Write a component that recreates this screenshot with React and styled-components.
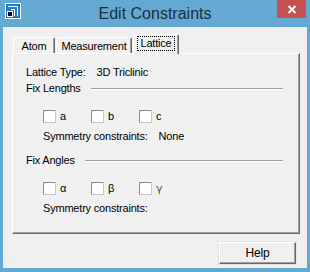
import React from 'react';
import styled, { createGlobalStyle } from 'styled-components';

const tabs = [
  { label: 'Atom', width: 42 },
  { label: 'Measurement', width: 76 },
  { label: 'Lattice', width: 46, active: true },
];

function AppIcon() {
  return (
    <svg width="16" height="16" viewBox="0 0 16 16">
      <rect x="0.5" y="0.5" width="15" height="15" fill="#1e7ccf" stroke="#ffffff" />
      <path d="M3 3.5H12.5V13" fill="none" stroke="#ffffff" />
      <path d="M6 6.5H9.5V13" fill="none" stroke="#ffffff" />
      <rect x="2.5" y="8.5" width="5" height="5" fill="#000000" stroke="#ffffff" />
    </svg>
  );
}

function CloseGlyph() {
  return (
    <svg width="10" height="9" viewBox="0 0 10 9">
      <path d="M1.5 1L8.5 8M8.5 1L1.5 8" stroke="#ffffff" strokeWidth="2" />
    </svg>
  );
}

function Check({ label, serif }) {
  return (
    <CheckItem>
      <Box />
      <CheckLabel $serif={serif}>{label}</CheckLabel>
    </CheckItem>
  );
}

export default function App() {
  return (
    <>
      <GlobalStyle />
      <Window>
        <TitleBar>
          <IconSlot><AppIcon /></IconSlot>
          <Title>Edit Constraints</Title>
          <Buttons>
            <CloseButton><CloseGlyph /></CloseButton>
          </Buttons>
        </TitleBar>

        <Client>
          <TabStrip>
            {tabs.map((t) => (
              <Tab key={t.label} $active={t.active} $width={t.width}>
                {t.active ? <Focus>{t.label}</Focus> : t.label}
              </Tab>
            ))}
          </TabStrip>

          <Panel>
            <Line>Lattice Type:<Value>3D Triclinic</Value></Line>

            <Group>
              <span>Fix Lengths</span>
              <Etched />
            </Group>
            <CheckRow>
              <Check label="a" />
              <Check label="b" />
              <Check label="c" />
            </CheckRow>
            <SymLine>Symmetry constraints:<Value>None</Value></SymLine>

            <Group $top={11}>
              <span>Fix Angles</span>
              <Etched />
            </Group>
            <CheckRow>
              <Check label="α" />
              <Check label="β" />
              <Check label="γ" serif />
            </CheckRow>
            <SymLine>Symmetry constraints:</SymLine>
          </Panel>

          <Footer>
            <Button>Help</Button>
          </Footer>
        </Client>
      </Window>
    </>
  );
}

const GlobalStyle = createGlobalStyle`
  body {
    margin: 0;
    font-family: "Liberation Sans", Arial, sans-serif;
  }
`;

const Window = styled.div`
  width: 310px;
  height: 272px;
  background: #63a9d1;
  display: flex;
  flex-direction: column;
  box-sizing: border-box;
`;

const TitleBar = styled.div`
  height: 27px;
  display: grid;
  grid-template-columns: 1fr auto 1fr;
  align-items: start;
`;

const IconSlot = styled.div`
  padding: 3px 0 0 5px;
  line-height: 0;
`;

const Title = styled.div`
  font-size: 16px;
  line-height: 16px;
  padding-top: 6px;
  color: #1f2f3e;
`;

const Buttons = styled.div`
  display: flex;
  justify-content: flex-end;
  padding-right: 4px;
`;

const CloseButton = styled.div`
  width: 29px;
  height: 18px;
  background: #c75050;
  display: flex;
  align-items: center;
  justify-content: center;
`;

const Client = styled.div`
  flex: 1;
  margin: 0 3px 4px 3px;
  background: #f0f0f0;
  padding: 7px 7px 0 9px;
  display: flex;
  flex-direction: column;
  font-size: 11px;
  letter-spacing: -0.2px;
  color: #000;
`;

const TabStrip = styled.div`
  display: flex;
  align-items: flex-end;
  height: 19px;
  padding-left: 1px;
  position: relative;
  z-index: 1;
`;

const Tab = styled.div`
  box-sizing: border-box;
  width: ${(p) => p.$width}px;
  height: ${(p) => (p.$active ? 20 : 16)}px;
  margin-bottom: ${(p) => (p.$active ? -1 : 0)}px;
  margin-right: 1px;
  padding-top: 2px;
  text-align: center;
  background: #f0f0f0;
  border-top: 1px solid #ffffff;
  border-left: 1px solid #ffffff;
  border-right: 1px solid #696969;
  border-radius: 2px 2px 0 0;
  box-shadow: inset -1px 0 #a0a0a0;
  line-height: 13px;
`;

const Focus = styled.span`
  display: inline-block;
  outline: 1px dotted #000;
  padding: 0 2px;
  line-height: 13px;
`;

const Panel = styled.div`
  box-sizing: border-box;
  height: 181px;
  width: 288px;
  border-top: 1px solid #ffffff;
  border-left: 1px solid #ffffff;
  border-right: 1px solid #696969;
  border-bottom: 1px solid #696969;
  box-shadow: inset -1px -1px #a0a0a0;
  padding: 12px 16px 0 13px;
  line-height: 13px;
`;

const Line = styled.div`
  display: flex;
`;

const Value = styled.span`
  margin-left: 11px;
`;

const Group = styled.div`
  display: flex;
  align-items: center;
  margin-top: ${(p) => p.$top ?? 3}px;
`;

const Etched = styled.div`
  flex: 1;
  margin-left: 10px;
  border-top: 1px solid #a0a0a0;
  border-bottom: 1px solid #ffffff;
`;

const CheckRow = styled.div`
  display: flex;
  margin-top: 15px;
  padding-left: 17px;
`;

const CheckItem = styled.div`
  display: flex;
  align-items: center;
  width: 48px;
`;

const Box = styled.div`
  box-sizing: border-box;
  width: 13px;
  height: 13px;
  background: #ffffff;
  border: 1px solid #8a8a8a;
  border-right-color: #c8c8c8;
  border-bottom-color: #c8c8c8;
`;

const CheckLabel = styled.span`
  margin-left: 4px;
  font-family: ${(p) => (p.$serif ? '"DejaVu Sans", sans-serif' : 'inherit')};
  color: ${(p) => (p.$serif ? '#555' : 'inherit')};
`;

const SymLine = styled.div`
  margin-top: 7px;
  padding-left: 17px;
`;

const Footer = styled.div`
  display: flex;
  justify-content: flex-end;
  padding: 8px 4px 0 0;
`;

const Button = styled.div`
  box-sizing: border-box;
  width: 77px;
  height: 22px;
  display: flex;
  align-items: center;
  justify-content: center;
  font-size: 12px;
  border-top: 1px solid #ffffff;
  border-left: 1px solid #ffffff;
  border-right: 1px solid #696969;
  border-bottom: 1px solid #696969;
  box-shadow: inset -1px -1px #a0a0a0, 0 0 0 1px #e3e3e3;
`;
